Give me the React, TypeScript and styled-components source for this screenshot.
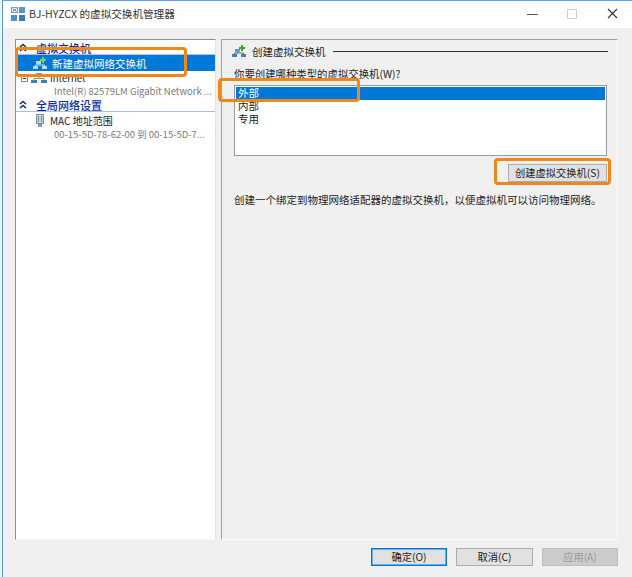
import styled, { createGlobalStyle } from "styled-components";

const GlobalStyle = createGlobalStyle`
  html, body {
    margin: 0;
    padding: 0;
    background: #ffffff;
  }
  * {
    box-sizing: border-box;
  }
`;

const SwitchIcon = ({ light }: { light?: boolean }) => (
  <svg width="16" height="13" viewBox="0 0 16 13">
    <rect x="1" y="9" width="5" height="3" fill={light ? "#bcd9f2" : "#3f7fc0"} />
    <rect x="10" y="9" width="5" height="3" fill={light ? "#bcd9f2" : "#3f7fc0"} />
    <rect x="4" y="4" width="5" height="3" fill={light ? "#bcd9f2" : "#5a9ad6"} />
    <path d="M3.5 9V8h9v1M6.5 8V7" stroke={light ? "#d8e8f5" : "#5b6b7a"} fill="none" />
    <path d="M10 0h2v2h2v2h-2v2h-2V4H8V2h2z" fill={light ? "#74d46a" : "#3aa635"} />
  </svg>
);

const NetworkIcon = () => (
  <svg width="16" height="11" viewBox="0 0 16 11">
    <rect x="5" y="0" width="6" height="3" fill="#5a9ad6" />
    <rect x="0" y="7" width="6" height="3" fill="#3f7fc0" />
    <rect x="10" y="7" width="6" height="3" fill="#3f7fc0" />
    <path d="M3 7V5.5h10V7M8 5.5V3" stroke="#7fa05f" fill="none" />
  </svg>
);

const AppIcon = () => (
  <svg width="16" height="16" viewBox="0 0 16 16">
    <rect x="1.5" y="1.5" width="6" height="5" fill="none" stroke="#6fa3d3" />
    <path d="M2.5 2.5l4 3M6.5 2.5l-4 3" stroke="#6b7f93" fill="none" />
    <rect x="9" y="1" width="6" height="6" fill="#5b93c9" />
    <rect x="1" y="9" width="6" height="6" fill="#4f8fce" />
    <rect x="9" y="9" width="6" height="6" fill="#3d78b3" />
  </svg>
);

const ChipIcon = () => (
  <svg width="8" height="14" viewBox="0 0 8 14">
    <rect x="0.5" y="0.5" width="7" height="9" fill="#c4d3e0" stroke="#7b8b99" />
    <path d="M2.5 2v6M5.5 2v6" stroke="#7b8b99" />
    <path d="M2 10h4v3H2z" fill="#8797a5" />
  </svg>
);

const Chevrons = () => (
  <svg width="8" height="9" viewBox="0 0 8 9">
    <path d="M1 4l3-2.6L7 4M1 8l3-2.6L7 8" stroke="#14285c" strokeWidth="1.4" fill="none" />
  </svg>
);

const App = () => {
  return (
    <>
      <GlobalStyle />
      <Page>
        <Window>
          <TitleBar>
            <AppIcon />
            <TitleText>BJ-HYZCX 的虚拟交换机管理器</TitleText>
            <WindowButtons>
              <WindowButton>
                <svg width="11" height="11" viewBox="0 0 11 11">
                  <path d="M0 6.5h11" stroke="#555" />
                </svg>
              </WindowButton>
              <WindowButton>
                <svg width="10" height="10" viewBox="0 0 10 10">
                  <rect x="0.5" y="0.5" width="9" height="9" fill="none" stroke="#cfcfcf" />
                </svg>
              </WindowButton>
              <WindowButton>
                <svg width="11" height="11" viewBox="0 0 11 11">
                  <path d="M1 1l9 9M10 1l-9 9" stroke="#333" strokeWidth="1.1" />
                </svg>
              </WindowButton>
            </WindowButtons>
          </TitleBar>
          <Body>
            <Panels>
              <LeftPanel>
                <SectionHead>
                  <Chevrons />
                  <SectionLabel>虚拟交换机</SectionLabel>
                </SectionHead>
                <SelectedRow>
                  <SwitchIcon light />
                  <span>新建虚拟网络交换机</span>
                </SelectedRow>
                <TreeRow>
                  <Expander />
                  <NetworkIcon />
                  <span>Internet</span>
                </TreeRow>
                <SubLine>Intel(R) 82579LM Gigabit Network ...</SubLine>
                <SectionHead>
                  <Chevrons />
                  <SectionLabel>全局网络设置</SectionLabel>
                </SectionHead>
                <MacRow>
                  <ChipIcon />
                  <span>MAC 地址范围</span>
                </MacRow>
                <SubLine>00-15-5D-78-62-00 到 00-15-5D-7...</SubLine>
              </LeftPanel>
              <RightPanel>
                <GroupHead>
                  <SwitchIcon />
                  <span>创建虚拟交换机</span>
                  <GroupRule />
                </GroupHead>
                <Question>你要创建哪种类型的虚拟交换机(W)?</Question>
                <ListBox>
                  <ListItem $selected>外部</ListItem>
                  <ListItem>内部</ListItem>
                  <ListItem>专用</ListItem>
                </ListBox>
                <CreateRow>
                  <DialogButton $width={99}>创建虚拟交换机(S)</DialogButton>
                </CreateRow>
                <Description>创建一个绑定到物理网络适配器的虚拟交换机，以便虚拟机可以访问物理网络。</Description>
              </RightPanel>
            </Panels>
            <Footer>
              <DialogButton $width={76} $primary>确定(O)</DialogButton>
              <DialogButton $width={77}>取消(C)</DialogButton>
              <DialogButton $width={76} $disabled>应用(A)</DialogButton>
            </Footer>
          </Body>
        </Window>
        <Callout $x={15} $y={47} $w={172} $h={30} />
        <Callout $x={218} $y={78} $w={142} $h={24} />
        <Callout $x={494} $y={158} $w={117} $h={27} />
      </Page>
    </>
  );
};

const Page = styled.div`
  position: relative;
  width: 632px;
  height: 577px;
  overflow: hidden;
  padding-left: 2px;
  background: #f3f3f3;
  font-family: "Noto Sans CJK SC", "Liberation Sans", sans-serif;
  font-size: 10px;
  color: #222222;
`;

const Window = styled.div`
  display: flex;
  flex-direction: column;
  height: 577px;
  width: 630px;
  border-left: 1px solid #4f9fd6;
  border-top: 1px solid #5aa5dc;
`;

const TitleBar = styled.div`
  display: flex;
  align-items: center;
  height: 27px;
  flex: none;
  padding: 0 0 2px 7px;
  background: #ffffff;
`;

const TitleText = styled.span`
  margin-left: 3px;
  font-size: 10.6px;
  color: #333333;
`;

const WindowButtons = styled.div`
  display: flex;
  margin-left: auto;
`;

const WindowButton = styled.div`
  display: flex;
  align-items: center;
  justify-content: center;
  width: 40px;
  height: 24px;
`;

const Body = styled.div`
  flex: 1;
  display: flex;
  flex-direction: column;
  padding: 11px 0 0 12px;
  background: #f0f0f0;
`;

const Panels = styled.div`
  display: flex;
  gap: 5px;
  height: 501px;
`;

const LeftPanel = styled.div`
  width: 201px;
  border: 1px solid #8f8f8f;
  border-right-color: #e3e3e3;
  border-bottom-color: #f8f8f8;
  background: #ffffff;
  padding-top: 1px;
`;

const RightPanel = styled.div`
  width: 397px;
  padding: 1px 9px 0 12px;
  border-top: 1px solid #a0a0a0;
  border-left: 1px solid #a0a0a0;
  border-right: 1px solid #fafafa;
  border-bottom: 1px solid #fafafa;
`;

const SectionHead = styled.div`
  display: flex;
  align-items: center;
  height: 14px;
  padding-left: 3px;
  border-bottom: 1px solid #a9c0ea;
`;

const SectionLabel = styled.span`
  margin-left: 9px;
  font-size: 11px;
  font-weight: 500;
  color: #0a2ea8;
`;

const SelectedRow = styled.div`
  display: flex;
  align-items: center;
  gap: 4px;
  height: 16px;
  padding-left: 16px;
  background: #0078d7;
  color: #ffffff;
  font-size: 10.5px;
`;

const TreeRow = styled.div`
  display: flex;
  align-items: center;
  height: 14px;
  padding-left: 5px;
  gap: 3px;
  font-size: 9.5px;
`;

const Expander = styled.span`
  position: relative;
  width: 7px;
  height: 7px;
  border: 1px solid #8a8a8a;

  &::after {
    content: "";
    position: absolute;
    left: 1px;
    top: 2px;
    width: 3px;
    height: 1px;
    background: #333333;
  }
`;

const MacRow = styled.div`
  display: flex;
  align-items: center;
  gap: 6px;
  height: 15px;
  margin-top: 1px;
  padding-left: 20px;
  font-size: 10px;
`;

const SubLine = styled.div`
  height: 13px;
  line-height: 13px;
  padding-left: 38px;
  color: #7a7a7a;
  font-size: 9.5px;
  white-space: nowrap;
`;

const GroupHead = styled.div`
  display: flex;
  align-items: center;
  gap: 5px;
  height: 20px;
  margin-left: -3px;
  font-size: 10.5px;
`;

const GroupRule = styled.div`
  flex: 1;
  height: 1px;
  margin-left: 2px;
  background: #333333;
`;

const Question = styled.div`
  margin-top: 5px;
  height: 15px;
  line-height: 15px;
  font-size: 10.4px;
`;

const ListBox = styled.div`
  width: 373px;
  height: 71px;
  margin-top: 4px;
  padding: 1px;
  border: 1px solid #9a9a9a;
  background: #ffffff;
`;

const ListItem = styled.div<{ $selected?: boolean }>`
  height: 13px;
  line-height: 11px;
  padding-left: 2px;
  font-size: 10.5px;
  background: ${(p) => (p.$selected ? "#0078d7" : "transparent")};
  color: ${(p) => (p.$selected ? "#ffffff" : "#222222")};
`;

const CreateRow = styled.div`
  display: flex;
  justify-content: flex-end;
  width: 373px;
  margin-top: 8px;
`;

const DialogButton = styled.div<{ $primary?: boolean; $disabled?: boolean; $width: number }>`
  display: flex;
  align-items: center;
  justify-content: center;
  width: ${(p) => p.$width}px;
  height: 18px;
  padding-bottom: 2px;
  font-size: 10.25px;
  background: ${(p) => (p.$disabled ? "#cccccc" : "#e1e1e1")};
  border: 1px solid ${(p) => (p.$primary ? "#0078d7" : p.$disabled ? "#bfbfbf" : "#adadad")};
  box-shadow: ${(p) => (p.$primary ? "inset 0 0 0 0.5px #0078d7" : "none")};
  color: ${(p) => (p.$disabled ? "#9a9a9a" : "#222222")};
`;

const Description = styled.div`
  margin-top: 10px;
  font-size: 10.5px;
  line-height: 15px;
  white-space: nowrap;
`;

const Footer = styled.div`
  display: flex;
  justify-content: flex-end;
  gap: 9px;
  width: 603px;
  margin-top: 8px;
`;

const Callout = styled.div<{ $x: number; $y: number; $w: number; $h: number }>`
  position: absolute;
  left: ${(p) => p.$x}px;
  top: ${(p) => p.$y}px;
  width: ${(p) => p.$w}px;
  height: ${(p) => p.$h}px;
  border: 3px solid #f0871a;
  border-radius: 4px;
`;

export default App;
